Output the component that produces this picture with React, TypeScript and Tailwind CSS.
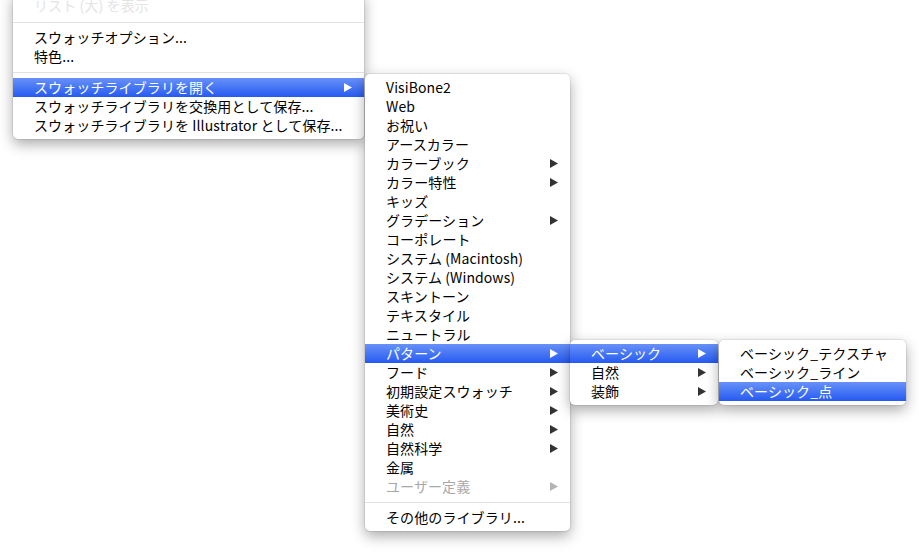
import React from "react";

type Item =
  | { kind: "sep" }
  | {
      kind?: "item";
      label: string;
      sub?: boolean;
      active?: boolean;
      disabled?: boolean;
      faded?: boolean;
    };

const FONT = '"Noto Sans CJK JP", "DejaVu Sans", sans-serif';

const mainMenu: Item[] = [
  { label: "リスト (大) を表示", faded: true },
  { kind: "sep" },
  { label: "スウォッチオプション..." },
  { label: "特色..." },
  { kind: "sep" },
  { label: "スウォッチライブラリを開く", sub: true, active: true },
  { label: "スウォッチライブラリを交換用として保存..." },
  { label: "スウォッチライブラリを Illustrator として保存..." },
];

const libraryMenu: Item[] = [
  { label: "VisiBone2" },
  { label: "Web" },
  { label: "お祝い" },
  { label: "アースカラー" },
  { label: "カラーブック", sub: true },
  { label: "カラー特性", sub: true },
  { label: "キッズ" },
  { label: "グラデーション", sub: true },
  { label: "コーポレート" },
  { label: "システム (Macintosh)" },
  { label: "システム (Windows)" },
  { label: "スキントーン" },
  { label: "テキスタイル" },
  { label: "ニュートラル" },
  { label: "パターン", sub: true, active: true },
  { label: "フード", sub: true },
  { label: "初期設定スウォッチ", sub: true },
  { label: "美術史", sub: true },
  { label: "自然", sub: true },
  { label: "自然科学", sub: true },
  { label: "金属" },
  { label: "ユーザー定義", sub: true, disabled: true },
  { kind: "sep" },
  { label: "その他のライブラリ..." },
];

const patternMenu: Item[] = [
  { label: "ベーシック", sub: true, active: true },
  { label: "自然", sub: true },
  { label: "装飾", sub: true },
];

const basicMenu: Item[] = [
  { label: "ベーシック_テクスチャ" },
  { label: "ベーシック_ライン" },
  { label: "ベーシック_点", active: true },
];

function Arrow({ color }: { color: string }) {
  return (
    <svg width="8" height="9" viewBox="0 0 8 9" className="shrink-0">
      <polygon points="0,0 8,4.5 0,9" fill={color} />
    </svg>
  );
}

// one drop-down panel; rows are 19px, separators 12px (Aqua metrics)
function Menu({ items, className }: { items: Item[]; className: string }) {
  return (
    <div
      className={`absolute bg-white py-[4px] rounded-[5px] shadow-[0_5px_14px_rgba(0,0,0,0.34),0_0_0_1px_rgba(0,0,0,0.07)] ${className}`}
      style={{ fontFamily: FONT }}
    >
      {items.map((it, i) => {
        if (it.kind === "sep") {
          return (
            <div key={i} className="h-[12px] pt-[6px]">
              <div className="h-px bg-[#e2e2e2]" />
            </div>
          );
        }
        const textColor = it.active
          ? "text-white"
          : it.disabled
          ? "text-[#a8a8a8]"
          : it.faded
          ? "text-[#e4e4e4]"
          : "text-black";
        const arrowColor = it.active ? "#ffffff" : it.disabled ? "#b4b4b4" : "#333333";
        return (
          <div
            key={i}
            className={`flex h-[19px] items-center justify-between pl-[21px] pr-[12px] text-[14px] leading-[19px] whitespace-nowrap ${textColor} ${
              it.active ? "bg-gradient-to-b from-[#6890f8] to-[#2559f1]" : ""
            }`}
          >
            <span className={`tracking-[0.1px] ${it.faded ? "-mt-[3px]" : "-mt-px"}`}>{it.label}</span>
            {it.sub && <Arrow color={arrowColor} />}
          </div>
        );
      })}
    </div>
  );
}

export default function App() {
  return (
    <div className="relative h-[555px] w-[919px] overflow-hidden bg-white">
      <Menu items={mainMenu} className="left-[13px] top-[-7px] w-[351px] rounded-t-none" />
      <Menu items={libraryMenu} className="left-[365px] top-[74px] w-[205px]" />
      <Menu items={patternMenu} className="left-[570px] top-[340px] w-[148px]" />
      <Menu items={basicMenu} className="left-[719px] top-[340px] w-[187px]" />
    </div>
  );
}
